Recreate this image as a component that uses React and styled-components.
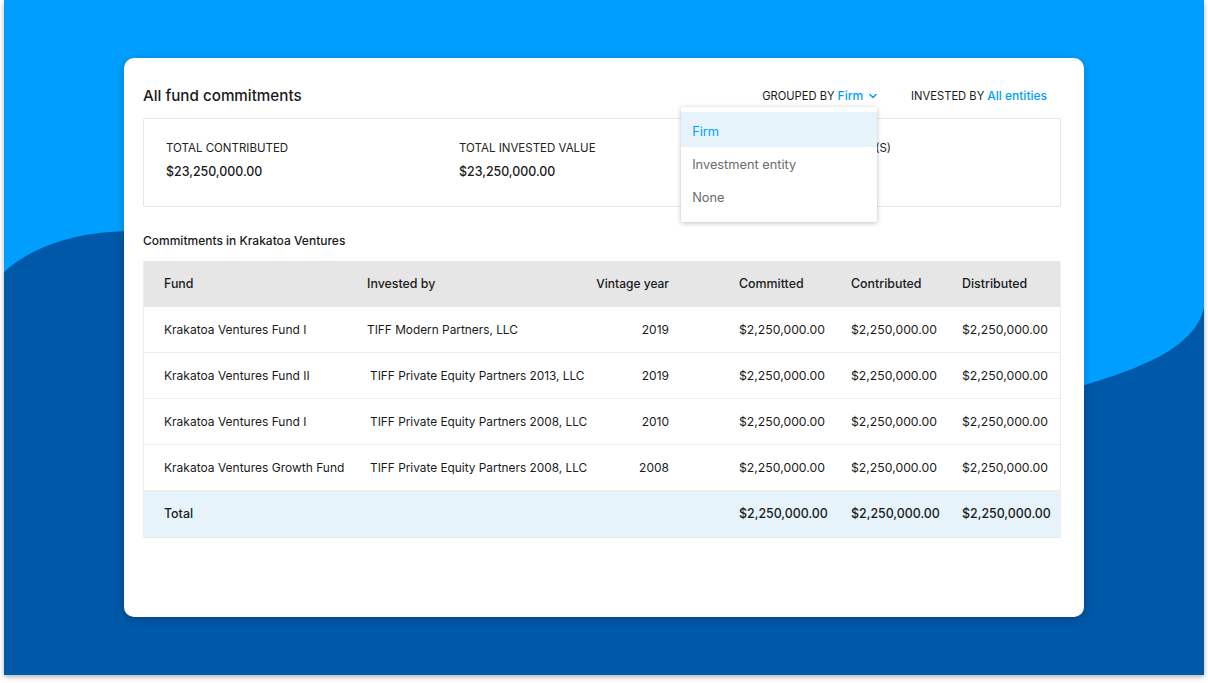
import React from "react";
import styled, { createGlobalStyle } from "styled-components";
import { FiChevronDown } from "react-icons/fi";

const GlobalStyle = createGlobalStyle`
  html, body {
    margin: 0;
    background: #ffffff;
    font-family: Inter, "Liberation Sans", sans-serif;
    color: #1a1a1a;
  }
  body {
    min-height: 683px;
  }
`;

const Stage = styled.div`
  position: relative;
  box-sizing: border-box;
  width: 1200px;
  height: 675px;
  margin-left: 4px;
  padding: 58px 120px;
  background: #009fff;
  overflow: hidden;
  box-shadow: 0 2px 5px rgba(0, 0, 0, 0.3);
`;

const Wave = styled.svg`
  position: absolute;
  left: 0;
  top: 0;
`;

const Card = styled.div`
  position: relative;
  box-sizing: border-box;
  height: 559px;
  padding: 0 23px 0 19px;
  background: #ffffff;
  border-radius: 10px;
  box-shadow: 0 2px 10px rgba(0, 0, 0, 0.22);
`;

const Header = styled.div`
  display: flex;
  align-items: center;
  height: 60px;
`;

const Title = styled.h1`
  flex: 1;
  margin: 15px 0 0;
  font-size: 15.2px;
  font-weight: 500;
`;

const Filter = styled.div`
  position: relative;
  display: flex;
  align-items: baseline;
  margin-top: 15px;
  margin-right: ${(props) => props.$right}px;
  font-size: 11.2px;
`;

const FilterValue = styled.span`
  margin-left: 3px;
  color: #009fff;
  font-size: 12px;
  font-weight: 500;
`;

const Chevron = styled(FiChevronDown)`
  align-self: center;
  margin-left: 4px;
  color: #009fff;
  stroke-width: 3;
`;

const Menu = styled.div`
  position: absolute;
  top: 19px;
  left: -81px;
  width: 196px;
  box-sizing: border-box;
  padding: 5px 0 9px;
  background: #ffffff;
  border-radius: 2px;
  box-shadow: 0 1px 5px rgba(0, 0, 0, 0.25);
  z-index: 2;
`;

const MenuItem = styled.div`
  display: flex;
  align-items: center;
  height: ${(props) => (props.$active ? 35 : 33)}px;
  padding: ${(props) => (props.$active ? "3px" : "1px")} 11px 0;
  box-sizing: border-box;
  font-size: 12.8px;
  color: ${(props) => (props.$active ? "#009fff" : "#6b6b6b")};
  background: ${(props) => (props.$active ? "#e6f3fb" : "transparent")};
`;

const Stats = styled.div`
  display: grid;
  grid-template-columns: 293px 298px 1fr;
  box-sizing: border-box;
  height: 89px;
  padding: 22px 22px 0;
  border: 1px solid #e6e6e6;
  border-radius: 2px;
`;

const StatLabel = styled.div`
  font-size: 11.5px;
  line-height: 15px;
  color: #222222;
`;

const StatValue = styled.div`
  margin-top: 8px;
  font-size: 12.4px;
  line-height: 16px;
  font-weight: 500;
`;

const SectionTitle = styled.h2`
  margin: 27px 0 13px;
  font-size: 12px;
  line-height: 14px;
  font-weight: 500;
`;

const Table = styled.div`
  border: 1px solid #eeeeee;
  border-top: 0;
  border-bottom: 0;
`;

const Row = styled.div`
  display: grid;
  grid-template-columns: 203px 229px 143px 112px 111px 1fr;
  align-items: center;
  box-sizing: border-box;
  height: 46px;
  padding-left: 20px;
  font-size: ${(props) => (props.$strong ? 12.4 : 12)}px;
  font-weight: ${(props) => (props.$strong ? 500 : 400)};
  background: ${(props) => props.$bg || "#ffffff"};
  border-bottom: 1px solid ${(props) => props.$line || "#eeeeee"};
`;

const TotalRow = styled(Row)`
  height: 47px;
  padding-bottom: 1px;
`;

const Cell = styled.div`
  white-space: nowrap;
`;

const EntityCell = styled(Cell)`
  padding-left: ${(props) => props.$indent}px;
  font-size: 11.85px;
`;

const MoneyCell = styled(Cell)`
  font-size: 12.25px;
`;

const YearCell = styled(Cell)`
  padding-right: 70px;
  font-size: 12px;
  text-align: right;
`;

const money = "$2,250,000.00";

const rows = [
  ["Krakatoa Ventures Fund I", "TIFF Modern Partners, LLC", "2019", 0],
  ["Krakatoa Ventures Fund II", "TIFF Private Equity Partners 2013, LLC", "2019", 3],
  ["Krakatoa Ventures Fund I", "TIFF Private Equity Partners 2008, LLC", "2010", 3],
  ["Krakatoa Ventures Growth Fund", "TIFF Private Equity Partners 2008, LLC", "2008", 3],
];

const stats = [
  ["TOTAL CONTRIBUTED", "$23,250,000.00"],
  ["TOTAL INVESTED VALUE", "$23,250,000.00"],
  ["TOTAL DISTRIBUTED (S)"],
];

export default function App() {
  return (
    <Stage>
      <GlobalStyle />
      <Wave width="1200" height="675" viewBox="0 0 1200 675">
        <path
          d="M0 272 C30 245 75 231 130 231 C320 231 520 340 760 410 C860 430 980 415 1081 385 C1130 370 1190 350 1200 308 L1200 675 L0 675 Z"
          fill="#0058a8"
        />
      </Wave>
      <Card>
        <Header>
          <Title>All fund commitments</Title>
          <Filter $right={32}>
            GROUPED BY <FilterValue>Firm</FilterValue>
            <Chevron size={12} />
            <Menu>
              <MenuItem $active>Firm</MenuItem>
              <MenuItem>Investment entity</MenuItem>
              <MenuItem>None</MenuItem>
            </Menu>
          </Filter>
          <Filter $right={14}>
            INVESTED BY <FilterValue>All entities</FilterValue>
          </Filter>
        </Header>
        <Stats>
          {stats.map(([label, value]) => (
            <div key={label}>
              <StatLabel>{label}</StatLabel>
              {value && <StatValue>{value}</StatValue>}
            </div>
          ))}
        </Stats>
        <SectionTitle>Commitments in Krakatoa Ventures</SectionTitle>
        <Table>
          <Row $strong $bg="#e6e6e6" $line="#e6e6e6">
            <Cell>Fund</Cell>
            <Cell>Invested by</Cell>
            <YearCell>Vintage year</YearCell>
            <Cell>Committed</Cell>
            <Cell>Contributed</Cell>
            <Cell>Distributed</Cell>
          </Row>
          {rows.map(([fund, entity, year, indent]) => (
            <Row key={entity + year}>
              <Cell>{fund}</Cell>
              <EntityCell $indent={indent}>{entity}</EntityCell>
              <YearCell>{year}</YearCell>
              <MoneyCell>{money}</MoneyCell>
              <MoneyCell>{money}</MoneyCell>
              <MoneyCell>{money}</MoneyCell>
            </Row>
          ))}
          <TotalRow $strong $bg="#e6f3fb" $line="#dfe9ef">
            <Cell>Total</Cell>
            <Cell />
            <YearCell />
            <Cell>{money}</Cell>
            <Cell>{money}</Cell>
            <Cell>{money}</Cell>
          </TotalRow>
        </Table>
      </Card>
    </Stage>
  );
}
